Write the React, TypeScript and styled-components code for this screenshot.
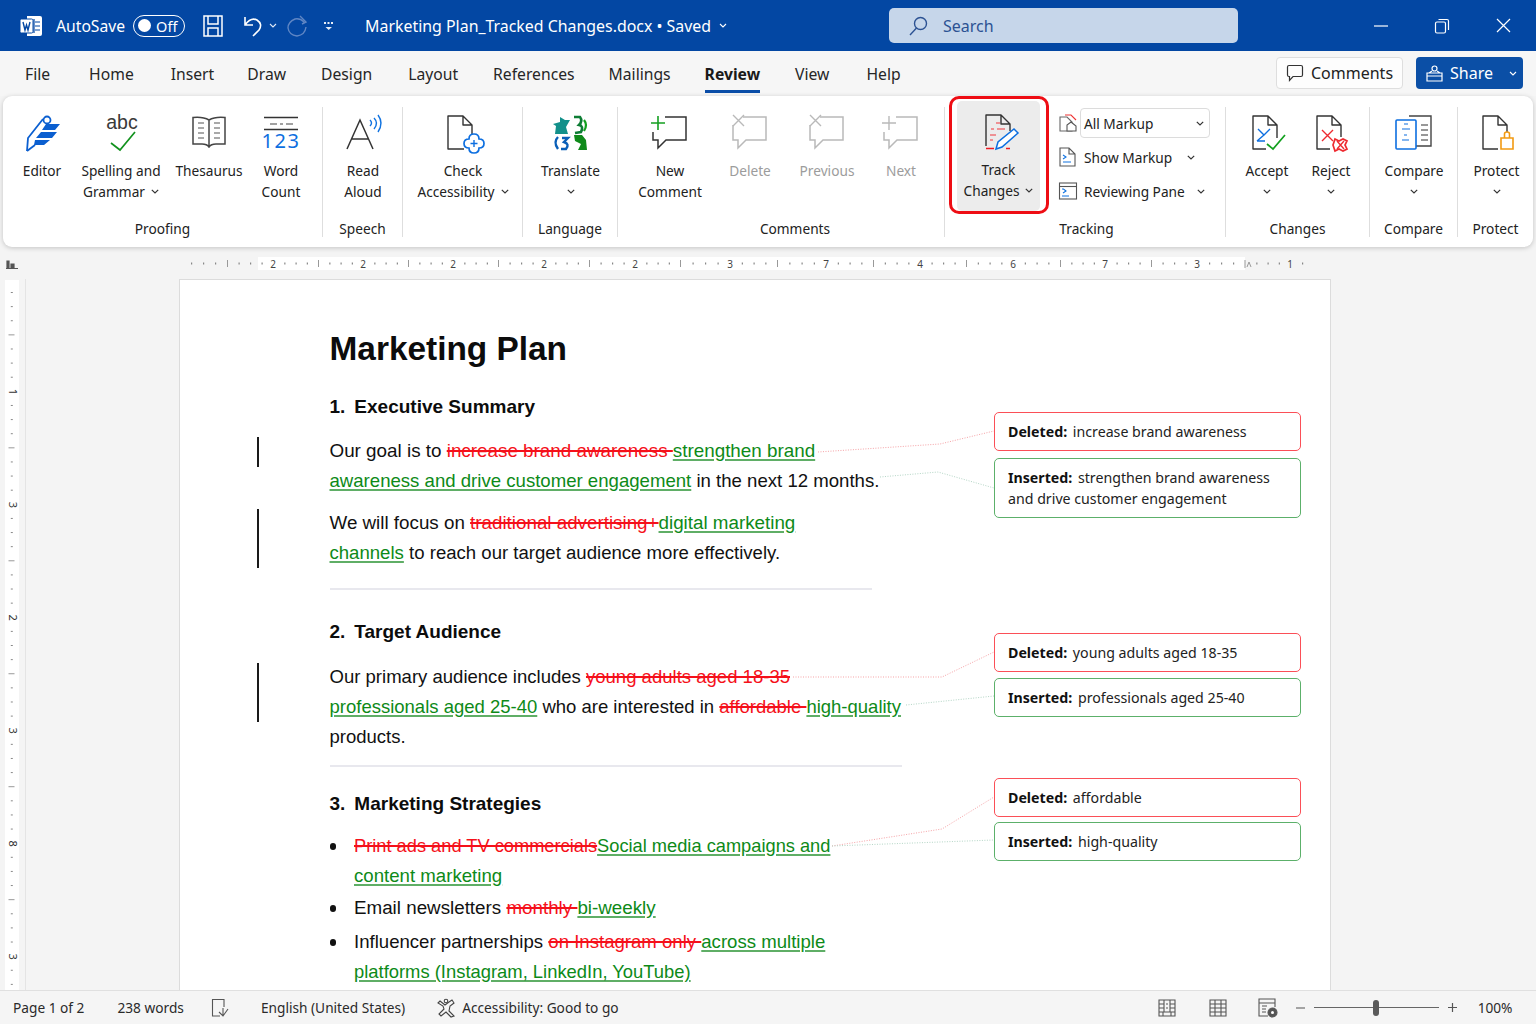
import React from "react";
import styled, { createGlobalStyle } from "styled-components";

const Global = createGlobalStyle`
  html, body { margin: 0; padding: 0; background: #f4f4f4; }
  #root { width: 1536px; height: 1024px; overflow: hidden; }
  * { box-sizing: border-box; }
`;

const UI = `"Noto Sans", "Open Sans", sans-serif`;
const DOC = `"Liberation Sans", Arial, sans-serif`;

const Shell = styled.div`
  width: 1536px; height: 1024px; display: flex; flex-direction: column;
  font-family: ${UI}; color: #222; background: #f4f4f4; overflow: hidden;
`;

/* ---------- title bar ---------- */
const TitleBar = styled.header`
  height: 51px; flex: none; background: #0347a3; color: #fff;
  display: grid; grid-template-columns: 889px 349px 1fr; align-items: center;
`;
const TitleLeft = styled.div`display: flex; align-items: center; padding-left: 20px;`;
const TitleText = styled.span<{ $ml?: number; $fs?: number }>`
  font-size: ${p => p.$fs ?? 15.7}px; margin-left: ${p => p.$ml ?? 0}px; white-space: nowrap; line-height: 20px;
`;
const Toggle = styled.div`
  width: 52px; height: 22px; margin-left: 8px; border: 1.5px solid #fff; border-radius: 11px;
  display: flex; align-items: center; padding-left: 4px; gap: 5px; font-size: 14.5px;
`;
const ToggleKnob = styled.span`width: 13px; height: 13px; border-radius: 50%; background: #fff; flex: none;`;
const Glyph = styled.svg<{ $ml?: number }>`
  display: block; flex: none; margin-left: ${p => p.$ml ?? 0}px; overflow: visible;
`;
const SearchBox = styled.div`
  height: 35px; background: #c6d6ea; border-radius: 5px; display: flex; align-items: center;
  padding-left: 19px; gap: 15px; color: #2c5293; font-size: 16px;
`;
const WindowBtns = styled.div`display: flex; align-items: center; justify-content: flex-end; padding-right: 25px; gap: 46px;`;

/* ---------- tabs ---------- */
const TabBar = styled.nav`
  height: 45px; flex: none; background: #f6f6f6; display: flex; align-items: flex-start;
  padding: 0 13px 0 25px;
`;
const Tab = styled.div<{ $active?: boolean; $ml: number }>`
  height: 42px; margin-left: ${p => p.$ml}px; padding-top: 11px; font-size: 15.7px; line-height: 24px;
  font-weight: ${p => (p.$active ? 700 : 400)}; color: ${p => (p.$active ? "#1a1a1a" : "#262626")};
  border-bottom: 3px solid ${p => (p.$active ? "#0b4ea8" : "transparent")};
  white-space: nowrap;
`;
const TabActions = styled.div`margin-left: auto; display: flex; gap: 13px; padding-top: 6px;`;
const CommentsBtn = styled.div`
  width: 127px; height: 32px; background: #fdfdfd; border: 1px solid #dedede; border-radius: 4px;
  display: flex; align-items: center; padding-left: 9px; gap: 7px; font-size: 16px;
`;
const ShareBtn = styled.div`
  width: 107px; height: 32px; background: #0b4fa6; border-radius: 4px; color: #fff;
  display: flex; align-items: center; padding-left: 9px; gap: 6px; font-size: 16px;
`;

/* ---------- ribbon ---------- */
const Ribbon = styled.section`
  height: 151px; flex: none; margin: 0 3px; background: #fff; border-radius: 9px;
  box-shadow: 0 1px 5px rgba(0,0,0,.2); display: flex; padding: 11px 0 10px; position: relative; z-index: 2;
`;
const Group = styled.div<{ $w: number; $last?: boolean }>`
  width: ${p => p.$w}px; height: 130px; flex: none; display: flex; flex-direction: column;
  border-right: ${p => (p.$last ? "0" : "1px solid #dedede")};
`;
const GroupRow = styled.div`height: 112px; display: flex; align-items: flex-start;`;
const GroupLabel = styled.div<{ $pl?: number }>`
  height: 18px; line-height: 20px; font-size: 13.7px; text-align: center; color: #222;
  padding-left: ${p => p.$pl ?? 0}px; white-space: nowrap;
`;
const Item = styled.div<{ $w: number; $off?: boolean }>`
  width: ${p => p.$w}px; flex: none; display: flex; flex-direction: column; align-items: center;
  font-size: 13.7px; line-height: 21px; text-align: center; white-space: nowrap;
  color: ${p => (p.$off ? "#9c9c9c" : "#222")};
`;
const IconSlot = styled.div`width: 40px; height: 40px; margin: 5px 0 8px;`;
const LabelLine = styled.div`height: 21px; display: flex; align-items: center; justify-content: center; gap: 6px;`;
const TrackItem = styled.div`
  width: 83px; height: 110px; margin: -6px 0 0 12px; flex: none; position: relative;
  background: #ececec; border-radius: 5px; display: flex; flex-direction: column; align-items: center;
  padding-top: 5px; font-size: 13.7px; line-height: 21px; text-align: center; white-space: nowrap;
  &::after {
    content: ""; position: absolute; inset: -5px -9px -3px -8px; border: 3px solid #ee0d14; border-radius: 10px;
  }
`;
const MiniColumn = styled.div`margin: -1px 0 0 18px; display: flex; flex-direction: column; width: 152px;`;
const MiniRow = styled.div`height: 34px; display: flex; align-items: center; font-size: 13.7px; white-space: nowrap;`;
const MiniText = styled.span<{ $w: number }>`width: ${p => p.$w}px; margin-left: 6px;`;
const MarkupSelect = styled.div`
  width: 130px; height: 30px; margin-left: 2px; border: 1px solid #dcdcdc; border-radius: 4px;
  display: flex; align-items: center; justify-content: space-between; padding: 0 5px 0 3px; font-size: 13.7px;
`;

/* ---------- document area ---------- */
const Work = styled.main`flex: 1; min-height: 0; display: flex; flex-direction: column; background: #f4f4f4;`;
const RulerRow = styled.div`height: 32px; flex: none;`;
const PageRow = styled.div`flex: 1; min-height: 0; display: flex;`;
const SideRuler = styled.div`width: 26px; flex: none; border-right: 1px solid #e4e4e4;`;
const Page = styled.article`
  width: 1152px; margin-left: 153px; background: #fff; border: 1px solid #dcdcdc; border-bottom: 0;
  padding: 49px 0 0 149.5px; position: relative; overflow: hidden;
  font-family: ${DOC}; color: #111; line-height: 30px;
`;
const DocTitle = styled.h1`margin: 0 0 23px; font-size: 33.4px; line-height: 40px; font-weight: 700; color: #0c0c0c;`;
const Section = styled.section<{ $mt?: number }>`
  display: grid; grid-template-columns: 664.5px 307px; margin-top: ${p => p.$mt ?? 0}px;
`;
const Heading = styled.h2`margin: 0; font-size: 19px; line-height: 30px; font-weight: 700; color: #0c0c0c; display: flex;`;
const HeadingNum = styled.span`margin-right: 9px;`;
const Para = styled.div<{ $mt: number }>`margin: ${p => p.$mt}px 0 0; position: relative;`;
const Ln = styled.div<{ $fs: number }>`font-size: ${p => p.$fs}px; white-space: nowrap; height: 30px;`;
const ChangeBar = styled.span<{ $h: number }>`
  position: absolute; left: -73px; top: 1px; width: 2px; height: ${p => p.$h}px; background: #1a1a1a;
`;
const Del = styled.span`color: #f5101a; text-decoration: line-through; text-decoration-thickness: 1.5px;`;
const Ins = styled.span`color: #0d8a18; text-decoration: underline; text-decoration-color: #5fae66; text-underline-offset: 2px; text-decoration-thickness: 1.5px;`;
const Rule = styled.hr<{ $w: number; $mt: number }>`
  width: ${p => p.$w}px; height: 2px; margin: ${p => p.$mt}px 0 0; border: 0; background: #e8e8ee;
`;
const CommentCol = styled.div<{ $mt: number; $gap: number }>`
  display: flex; flex-direction: column; gap: ${p => p.$gap}px; margin-top: ${p => p.$mt}px;
`;
const Balloon = styled.div<{ $kind: "del" | "ins"; $h: number }>`
  height: ${p => p.$h}px; background: #fff; border-radius: 5px; padding: 0 13px;
  border: 1.3px solid ${p => (p.$kind === "del" ? "#fb4f57" : "#5cb06a")};
  display: flex; align-items: center; font-family: ${UI}; font-size: 14.2px; line-height: 21px; color: #222; white-space: nowrap;
  b { font-weight: 700; color: #111; margin-right: 2px; }
`;
const BulletRow = styled.div<{ $mt?: number }>`display: flex; margin-top: ${p => p.$mt ?? 0}px;`;
const BulletDot = styled.span`
  width: 6.5px; height: 6.5px; margin: 12px 18px 0 0; border-radius: 50%; background: #111; flex: none;
`;
const Connectors = styled.svg`position: absolute; left: -1px; top: -1px; pointer-events: none;`;

/* ---------- status bar ---------- */
const StatusBar = styled.footer`
  height: 34px; flex: none; background: #f5f5f5; border-top: 1px solid #e0e0e0; display: flex;
  align-items: center; padding: 0 20px 0 13px; font-size: 13.7px; color: #2a2a2a;
`;
const StatusText = styled.span<{ $ml?: number }>`margin-left: ${p => p.$ml ?? 0}px; white-space: nowrap;`;
const ZoomTrack = styled.div`
  width: 125px; height: 1.5px; background: #666; margin-left: 9px; position: relative; flex: none;
`;
const ZoomThumb = styled.span`
  position: absolute; left: 59px; top: -7px; width: 6px; height: 16px; border-radius: 3px; background: #5a5a5a;
`;

/* ---------- icons ---------- */
const Chevron = ({ color = "#333" }: { color?: string }) => (
  <Glyph width="8" height="5" viewBox="0 0 8 5">
    <path d="M.8.8 4 4 7.2.8" fill="none" stroke={color} strokeWidth="1.2" />
  </Glyph>
);
const Ico = ({ children }: { children: React.ReactNode }) => (
  <IconSlot>
    <Glyph width="40" height="40" viewBox="0 0 40 40" fill="none" strokeWidth="1.4">{children}</Glyph>
  </IconSlot>
);
const bubble = "M3 20V28H8V36L16 28H36V5H15";
const G = "#b9b9b9";

const EditorIcon = () => (
  <Ico>
    <path d="M5 39 6 26 21 7" stroke="#0b5fd0" strokeWidth="1.8" />
    <circle cx="25" cy="8" r="3.5" stroke="#0b5fd0" strokeWidth="1.8" />
    <path d="M5 39 13 33" stroke="#0b5fd0" strokeWidth="1.8" />
    <path d="M24 12H38L33 18H20ZM19 20H35L30 26H14ZM13 28H28L22 33H12Z" fill="#0b5fd0" />
  </Ico>
);
const SpellIcon = () => (
  <Ico>
    <text x="21" y="17" textAnchor="middle" fontFamily={DOC} fontSize="19.5" fill="#3a3a3a">abc</text>
    <path d="M10 31 19 38 34 20" stroke="#12921e" strokeWidth="1.7" />
  </Ico>
);
const BookIcon = () => (
  <Ico>
    <path d="M20 8Q14 4.500 4 5.500V32H13Q18 32 20 35Q22 32 27 32H36V5.500Q26 4.500 20 8V35" stroke="#444" strokeWidth="1.5" />
    <path d="M9 11H15M9 16H15M9 21H15M9 26H15M25 11H31M25 16H31M25 21H31M25 26H31" stroke="#555" strokeWidth="1.2" />
  </Ico>
);
const CountIcon = () => (
  <Ico>
    <path d="M3 5.500H37M3 17.500H37" stroke="#333" strokeWidth="1.3" />
    <path d="M9 12H16M19 12H22M25 12H32" stroke="#444" strokeWidth="1.2" />
    <text x="20" y="36" textAnchor="middle" fontFamily={UI} fontSize="20" letterSpacing="1.5" fill="#0d6fe0">123</text>
  </Ico>
);
const AloudIcon = () => (
  <Ico>
    <path d="M4 37 17 8 30 37M9 27H25" stroke="#333" strokeWidth="1.5" />
    <path d="M27 8Q30 11 27 14M31 6Q36 11 31 17M35 3Q41 11 35 20" stroke="#1173e0" strokeWidth="1.4" />
  </Ico>
);
const AccessIcon = () => (
  <Ico>
    <path d="M21 37H5V4H20L29 13V24M20 4V13H29" stroke="#333" strokeLinejoin="round" />
    <path d="M26 27Q26 22 31 22Q36 22 36 27Q41 27 41 31.500Q41 36 36 36Q36 41 31 41Q26 41 26 36Q21 36 21 31.500Q21 27 26 27Z" stroke="#0d6fe0" strokeWidth="1.7" fill="#fff" />
    <path d="M31 28V35M27.500 31.500H34.500" stroke="#0d6fe0" strokeWidth="1.4" />
  </Ico>
);
const TranslateIcon = () => (
  <Ico>
    <path d="M2 12 9 10V5L14 8 19 8 15 15 17 22H4L5 14Z" fill="#12908a" />
    <path d="M23 5H29Q32 9 28 13Q33 14 30 20L24 21" stroke="#0d7d34" strokeWidth="2.6" />
    <path d="M33 8Q37 13 33 19" stroke="#12a01e" strokeWidth="2.2" />
    <path d="M7 25Q2 30 7 37" stroke="#0a5fb8" strokeWidth="2.4" />
    <path d="M11 26H17L13 30Q19 32 15 37H10" stroke="#0a5fb8" strokeWidth="2.4" />
    <path d="M23 23H31L35 28 36 38H27L30 32 24 29Z" fill="#0f8a1a" />
  </Ico>
);
const NewCommentIcon = () => (
  <Ico>
    <path d={bubble} stroke="#333" strokeWidth="1.5" />
    <path d="M8 4V18M1 11H15" stroke="#15a021" strokeWidth="1.6" />
  </Ico>
);
const XBubble = () => (
  <Ico>
    <path d="M3 13V28H8V36L16 28H36V5H13" stroke={G} strokeWidth="1.5" />
    <path d="M3 3 14 14M14 3 3 14" stroke={G} strokeWidth="1.4" />
  </Ico>
);
const NextIcon = () => (
  <Ico>
    <path d={bubble} stroke={G} strokeWidth="1.5" />
    <path d="M8 4V18M1 11H15" stroke={G} strokeWidth="1.4" />
  </Ico>
);
const TrackIcon = () => (
  <Ico>
    <path d="M7 35V4H22L31 13V20M22 4V13H31" stroke="#333" strokeLinejoin="round" />
    <path d="M7 37.500H15M27 37.500H31" stroke="#ee1c24" strokeWidth="1.6" />
    <path d="M17 12H21M12 18H15M18 18H26M11 24H17M11 29H14" stroke="#f0363d" strokeWidth="1.2" />
    <path d="M17 38 19 31 35 18 39 22 23 36Z" stroke="#0d6fe0" strokeWidth="1.5" fill="#fff" />
  </Ico>
);
const AcceptIcon = () => (
  <Ico>
    <path d="M19 37H6V4H21L30 13V26M21 4V13H30" stroke="#333" strokeLinejoin="round" />
    <path d="M11 17 17 23 23 17M10 29H18M17 23 10 29" stroke="#0d6fe0" strokeWidth="1.4" />
    <path d="M20 32 26 37 38 23" stroke="#12a01e" strokeWidth="1.7" />
  </Ico>
);
const RejectIcon = () => (
  <Ico>
    <path d="M19 37H6V4H21L30 13V25M21 4V13H30" stroke="#333" strokeLinejoin="round" />
    <path d="M11 18 22 29M22 18 11 29" stroke="#ee2a30" strokeWidth="1.4" />
    <path d="M24 27 28 29 32 27 36 29 34 33 36 37 32 39 28 37 24 39 22 33Z" stroke="#ee2a30" strokeWidth="1.7" fill="#fff" />
    <path d="M26 29 33 37M33 29 26 37" stroke="#ee2a30" strokeWidth="1.4" />
  </Ico>
);
const CompareIcon = () => (
  <Ico>
    <path d="M15 4H37V34H22" stroke="#444" strokeWidth="1.4" />
    <path d="M27 13H34M27 18H34M27 23H34M27 28H34" stroke="#777" strokeWidth="1.3" />
    <rect x="2" y="8" width="20" height="29" rx="1" stroke="#0d6fe0" strokeWidth="1.6" fill="#fff" />
    <path d="M10 12H14M8 17H16M10 23H13M8 28H15" stroke="#0d6fe0" strokeWidth="1.2" />
  </Ico>
);
const ProtectIcon = () => (
  <Ico>
    <path d="M21 37H6V4H21L30 13V20M21 4V13H30" stroke="#333" strokeLinejoin="round" />
    <path d="M24 26H36V37H24ZM27.500 26V22Q27.500 20 30 20Q32.500 20 32.500 22V26" stroke="#f29a12" strokeWidth="1.6" />
  </Ico>
);
const Mini = ({ children }: { children: React.ReactNode }) => (
  <Glyph width="20" height="20" viewBox="0 0 20 20" fill="none" strokeWidth="1.1">{children}</Glyph>
);

/* ---------- rulers (drawings) ---------- */
const topMarks: [number, string][] = [
  [227, "|"], [273, "2"], [318, "|"], [363, "2"], [408, "|"], [453, "2"], [498, "|"], [544, "2"], [589, "|"],
  [635, "2"], [680, "|"], [730, "3"], [777, "|"], [826, "7"], [873, "|"], [920, "4"], [966, "|"], [1013, "6"],
  [1060, "|"], [1105, "7"], [1151, "|"], [1197, "3"], [1245, "^"], [1290, "1"],
];
const TopRuler = () => {
  const dots: number[] = [191, 203, 215, 1302];
  topMarks.slice(0, -1).forEach(([x], i) => {
    const n = topMarks[i + 1][0];
    [1, 2, 3].forEach(k => dots.push(x + ((n - x) * k) / 4));
  });
  return (
    <Glyph width="1536" height="32" viewBox="0 0 1536 32">
      <rect x="258" y="10" width="987" height="13" fill="#fff" />
      <path d="M7 21V14H9V21ZM11 21V17H14V21ZM6 21.500H18" stroke="#555" strokeWidth="1.2" fill="#555" />
      {dots.map(x => <rect key={x} x={x} y="15.500" width="1.200" height="2" fill="#888" />)}
      {topMarks.map(([x, t]) =>
        t === "|" ? <rect key={x} x={x} y="13" width="1" height="7" fill="#999" />
          : t === "^" ? <path key={x} d="M1245 21V13M1247 20 1249 15 1251 20" stroke="#999" fill="none" />
            : <text key={x} x={x} y="20.500" textAnchor="middle" fontFamily={UI} fontSize="10" fill="#444">{t}</text>
      )}
    </Glyph>
  );
};
const sideNums: Record<number, string> = { 7: "1", 15: "3", 23: "2", 31: "3", 39: "8", 47: "3" };
const SideRulerArt = () => (
  <Glyph width="25" height="711" viewBox="0 0 25 711">
    <rect x="5" y="1" width="14" height="710" fill="#fff" />
    {Array.from({ length: 50 }, (_, i) => {
      const y = 13 + i * 14.12;
      if (sideNums[i]) return <text key={i} x="12" y={y + 4.500} textAnchor="middle" fontFamily={UI} fontSize="11" fill="#333" transform={`rotate(90 12 ${y + 1})`}>{sideNums[i]}</text>;
      return i % 4 === 3
        ? <rect key={i} x="8.500" y={y} width="6" height="1" fill="#999" />
        : <rect key={i} x="10.800" y={y} width="2" height="1" fill="#888" />;
    })}
  </Glyph>
);

const Line = ({ p, c }: { p: string; c: string }) => (
  <polyline points={p} fill="none" stroke={c} strokeWidth="1" strokeDasharray="1 1.500" />
);
const R = "#f6a3a7", GR = "#b4d6c6";
const shift = (pts: [number, number][]) => pts.map(([x, y]) => `${x - 179},${y - 279}`).join(" ");

export default function App() {
  return (
    <Shell>
      <Global />
      <TitleBar>
        <TitleLeft>
          <Glyph width="22" height="20" viewBox="0 0 22 20">
            <path d="M7 0H20Q22 0 22 2V18Q22 20 20 20H7Z" fill="#fff" />
            <path d="M14 3V17M15 6H20M15 10H20M15 14H20" stroke="#0347a3" strokeWidth="1.200" fill="none" />
            <rect x="0" y="3" width="13" height="14" rx="1.500" fill="#fff" stroke="#0347a3" />
            <path d="M3 6 5 14 6.500 9 8 14 10 6" stroke="#0347a3" strokeWidth="1.400" fill="none" />
          </Glyph>
          <TitleText $ml={14}>AutoSave</TitleText>
          <Toggle><ToggleKnob />Off</Toggle>
          <Glyph $ml={18} width="20" height="22" viewBox="0 0 20 22" fill="none" stroke="#fff" strokeWidth="1.500">
            <path d="M1 1H19V21H1ZM5 1V9H15V1M5 21V13H15V21" />
          </Glyph>
          <Glyph $ml={20} width="20" height="22" viewBox="0 0 20 22" fill="none" stroke="#fff" strokeWidth="1.600">
            <path d="M2 2V10H10M2 10Q8 2 14 5Q20 9 16 15L10 21" />
          </Glyph>
          <Glyph $ml={6} width="8" height="5" viewBox="0 0 8 5"><path d="M1 1 4 4 7 1" stroke="#dfe8f5" fill="none" strokeWidth="1.100" /></Glyph>
          <Glyph $ml={10} width="21" height="22" viewBox="0 0 21 22" fill="none" stroke="#5f86c4" strokeWidth="1.400">
            <path d="M17 7Q13 3 8 4Q1 7 1 13Q2 20 10 21Q18 20 19 12M13 1 19 7 15 9" />
          </Glyph>
          <Glyph $ml={16} width="10" height="8" viewBox="0 0 10 8" fill="#e6edf7">
            <rect x="0" y="0" width="2" height="2" /><rect x="3.500" y="0" width="2" height="2" /><rect x="7" y="0" width="2" height="2" />
            <path d="M1.500 5H8L4.700 8Z" />
          </Glyph>
          <TitleText $ml={31} $fs={15.9}>Marketing Plan_Tracked Changes.docx • Saved</TitleText>
          <Glyph $ml={8} width="8" height="5" viewBox="0 0 8 5"><path d="M1 1 4 4 7 1" stroke="#fff" fill="none" strokeWidth="1.100" /></Glyph>
        </TitleLeft>
        <SearchBox>
          <Glyph width="20" height="20" viewBox="0 0 20 20" fill="none" stroke="#2c5293" strokeWidth="1.400">
            <circle cx="12.500" cy="7.500" r="6" /><path d="M8.500 12 2 19" />
          </Glyph>
          Search
        </SearchBox>
        <WindowBtns>
          <Glyph width="14" height="2" viewBox="0 0 14 2"><path d="M0 1H14" stroke="#fff" strokeWidth="1.200" /></Glyph>
          <Glyph width="16" height="16" viewBox="0 0 16 16" fill="none" stroke="#fff" strokeWidth="1.200">
            <rect x="1.500" y="4" width="10" height="11" rx="1.500" /><path d="M4.500 1.500H13Q14.500 1.500 14.500 3V12" />
          </Glyph>
          <Glyph width="15" height="15" viewBox="0 0 15 15" stroke="#fff" strokeWidth="1.200"><path d="M1 1 14 14M14 1 1 14" /></Glyph>
        </WindowBtns>
      </TitleBar>

      <TabBar>
        <Tab $ml={0}>File</Tab>
        <Tab $ml={39}>Home</Tab>
        <Tab $ml={37}>Insert</Tab>
        <Tab $ml={33}>Draw</Tab>
        <Tab $ml={35}>Design</Tab>
        <Tab $ml={36}>Layout</Tab>
        <Tab $ml={35}>References</Tab>
        <Tab $ml={34}>Mailings</Tab>
        <Tab $ml={34} $active>Review</Tab>
        <Tab $ml={35}>View</Tab>
        <Tab $ml={37}>Help</Tab>
        <TabActions>
          <CommentsBtn>
            <Glyph width="18" height="18" viewBox="0 0 18 18" fill="none" stroke="#333" strokeWidth="1.200">
              <path d="M3 1.500H15Q16.500 1.500 16.500 3V11Q16.500 12.500 15 12.500H7L3.500 16.500V12.500H3Q1.500 12.500 1.500 11V3Q1.500 1.500 3 1.500Z" />
            </Glyph>
            Comments
          </CommentsBtn>
          <ShareBtn>
            <Glyph width="19" height="19" viewBox="0 0 19 19" fill="none" stroke="#fff" strokeWidth="1.200">
              <circle cx="9.500" cy="4.500" r="2.500" /><path d="M2 9H17V17H2ZM2 12H17M7 7 4 9M12 7 15 9" />
            </Glyph>
            Share
            <Glyph $ml={10} width="8" height="5" viewBox="0 0 8 5"><path d="M1 1 4 4 7 1" stroke="#fff" fill="none" strokeWidth="1.100" /></Glyph>
          </ShareBtn>
        </TabActions>
      </TabBar>

      <Ribbon>
        <Group $w={320}>
          <GroupRow>
            <Item $w={78}><EditorIcon />Editor</Item>
            <Item $w={80}><SpellIcon />Spelling and<LabelLine>Grammar<Chevron /></LabelLine></Item>
            <Item $w={96}><BookIcon />Thesaurus</Item>
            <Item $w={48}><CountIcon />Word<br />Count</Item>
          </GroupRow>
          <GroupLabel>Proofing</GroupLabel>
        </Group>
        <Group $w={80}>
          <GroupRow><Item $w={80}><AloudIcon />Read<br />Aloud</Item></GroupRow>
          <GroupLabel>Speech</GroupLabel>
        </Group>
        <Group $w={120}>
          <GroupRow><Item $w={120}><AccessIcon />Check<LabelLine>Accessibility<Chevron /></LabelLine></Item></GroupRow>
        </Group>
        <Group $w={95}>
          <GroupRow><Item $w={95}><TranslateIcon />Translate<LabelLine><Chevron /></LabelLine></Item></GroupRow>
          <GroupLabel>Language</GroupLabel>
        </Group>
        <Group $w={327}>
          <GroupRow>
            <Item $w={104}><NewCommentIcon />New<br />Comment</Item>
            <Item $w={56} $off><XBubble />Delete</Item>
            <Item $w={98} $off><XBubble />Previous</Item>
            <Item $w={50} $off><NextIcon />Next</Item>
          </GroupRow>
          <GroupLabel $pl={28}>Comments</GroupLabel>
        </Group>
        <Group $w={281}>
          <GroupRow>
            <TrackItem><TrackIcon />Track<LabelLine>Changes<Chevron /></LabelLine></TrackItem>
            <MiniColumn>
              <MiniRow>
                <Mini>
                  <path d="M2 4H9L14 9V18H2Z" stroke="#666" />
                  <path d="M7 2H13L18 7" stroke="#e33" />
                  <path d="M9 18V12L13 9 18 13V18Z" stroke="#555" fill="#fff" />
                </Mini>
                <MarkupSelect>All Markup<Chevron /></MarkupSelect>
              </MiniRow>
              <MiniRow>
                <Mini>
                  <path d="M2 1H11L17 7V19H2ZM11 1V7H17" stroke="#555" />
                  <path d="M5 8 8 10 5 12M5 15H13" stroke="#1173e0" />
                </Mini>
                <MiniText $w={103}>Show Markup</MiniText>
                <Chevron />
              </MiniRow>
              <MiniRow>
                <Mini>
                  <rect x="1.500" y="2" width="17" height="16" stroke="#555" />
                  <path d="M1.500 5.500H18.500" stroke="#555" />
                  <path d="M4 8H5.500L8 10 5 12M4 15H11" stroke="#1173e0" />
                </Mini>
                <MiniText $w={113}>Reviewing Pane</MiniText>
                <Chevron />
              </MiniRow>
            </MiniColumn>
          </GroupRow>
          <GroupLabel $pl={3}>Tracking</GroupLabel>
        </Group>
        <Group $w={144}>
          <GroupRow>
            <Item $w={82}><AcceptIcon />Accept<LabelLine><Chevron /></LabelLine></Item>
            <Item $w={46}><RejectIcon />Reject<LabelLine><Chevron /></LabelLine></Item>
          </GroupRow>
          <GroupLabel>Changes</GroupLabel>
        </Group>
        <Group $w={88}>
          <GroupRow><Item $w={88}><CompareIcon />Compare<LabelLine><Chevron /></LabelLine></Item></GroupRow>
          <GroupLabel>Compare</GroupLabel>
        </Group>
        <Group $w={75} $last>
          <GroupRow><Item $w={77}><ProtectIcon />Protect<LabelLine><Chevron /></LabelLine></Item></GroupRow>
          <GroupLabel>Protect</GroupLabel>
        </Group>
      </Ribbon>

      <Work>
        <RulerRow><TopRuler /></RulerRow>
        <PageRow>
          <SideRuler><SideRulerArt /></SideRuler>
          <Page>
            <DocTitle>Marketing Plan</DocTitle>
            <Section>
              <div>
                <Heading><HeadingNum>1.</HeadingNum>Executive Summary</Heading>
                <Para $mt={14}>
                  <ChangeBar $h={30} />
                  <Ln $fs={18.83}>Our goal is to <Del>increase brand awareness </Del><Ins>strengthen brand</Ins></Ln>
                  <Ln $fs={18.6}><Ins>awareness and drive customer engagement</Ins> in the next 12 months.</Ln>
                </Para>
                <Para $mt={12}>
                  <ChangeBar $h={59} />
                  <Ln $fs={18.8}>We will focus on <Del>traditional advertising+</Del><Ins>digital marketing</Ins></Ln>
                  <Ln $fs={18.58}><Ins>channels</Ins> to reach our target audience more effectively.</Ln>
                </Para>
                <Rule $w={542} $mt={20} />
              </div>
              <CommentCol $mt={20} $gap={7}>
                <Balloon $kind="del" $h={39}><span><b>Deleted:</b> increase brand awareness</span></Balloon>
                <Balloon $kind="ins" $h={60}><span><b>Inserted:</b> strengthen brand awareness<br />and drive customer engagement</span></Balloon>
              </CommentCol>
            </Section>
            <Section $mt={27}>
              <div>
                <Heading><HeadingNum>2.</HeadingNum>Target Audience</Heading>
                <Para $mt={15}>
                  <ChangeBar $h={59} />
                  <Ln $fs={18.55}>Our primary audience includes <Del>young adults aged 18-35</Del></Ln>
                  <Ln $fs={18.5}><Ins>professionals aged 25-40</Ins> who are interested in <Del>affordable </Del><Ins>high-quality</Ins></Ln>
                  <Ln $fs={18.5}>products.</Ln>
                </Para>
                <Rule $w={572} $mt={13} />
              </div>
              <CommentCol $mt={16} $gap={6}>
                <Balloon $kind="del" $h={39}><span><b>Deleted:</b> young adults aged 18-35</span></Balloon>
                <Balloon $kind="ins" $h={39}><span><b>Inserted:</b> professionals aged 25-40</span></Balloon>
              </CommentCol>
            </Section>
            <Section $mt={22}>
              <div>
                <Heading><HeadingNum>3.</HeadingNum>Marketing Strategies</Heading>
                <BulletRow $mt={12}>
                  <BulletDot />
                  <div>
                    <Ln $fs={18.25}><Del>Print ads and TV commercials</Del><Ins>Social media campaigns and</Ins></Ln>
                    <Ln $fs={18.65}><Ins>content marketing</Ins></Ln>
                  </div>
                </BulletRow>
                <BulletRow $mt={2}>
                  <BulletDot />
                  <Ln $fs={18.8}>Email newsletters <Del>monthly </Del><Ins>bi-weekly</Ins></Ln>
                </BulletRow>
                <BulletRow $mt={4}>
                  <BulletDot />
                  <div>
                    <Ln $fs={18.6}>Influencer partnerships <Del>on Instagram only </Del><Ins>across multiple</Ins></Ln>
                    <Ln $fs={18.4}><Ins>platforms (Instagram, LinkedIn, YouTube)</Ins></Ln>
                  </div>
                </BulletRow>
              </div>
              <CommentCol $mt={-11} $gap={5}>
                <Balloon $kind="del" $h={39}><span><b>Deleted:</b> affordable</span></Balloon>
                <Balloon $kind="ins" $h={39}><span><b>Inserted:</b> high-quality</span></Balloon>
              </CommentCol>
            </Section>
            <Connectors width="1150" height="711" viewBox="0 0 1150 711">
              <Line c={R} p={shift([[818, 452], [940, 444], [994, 431]])} />
              <Line c={GR} p={shift([[880, 477], [938, 472], [994, 488]])} />
              <Line c={R} p={shift([[793, 677], [942, 677], [994, 652]])} />
              <Line c={GR} p={shift([[906, 705], [994, 696]])} />
              <Line c={R} p={shift([[832, 846], [942, 829], [994, 797]])} />
              <Line c={GR} p={shift([[832, 846], [994, 840]])} />
            </Connectors>
          </Page>
        </PageRow>
      </Work>

      <StatusBar>
        <StatusText>Page 1 of 2</StatusText>
        <StatusText $ml={33}>238 words</StatusText>
        <Glyph $ml={27} width="20" height="20" viewBox="0 0 20 20" fill="none" stroke="#555" strokeWidth="1.100">
          <path d="M9 18H1.500V1.500H13V9M12 10V18M8 14 12 18 17 11" />
        </Glyph>
        <StatusText $ml={30}>English (United States)</StatusText>
        <Glyph $ml={32} width="20" height="20" viewBox="0 0 20 20" fill="none" stroke="#444" strokeWidth="1.100">
          <path d="M3 3 8 7 12 4 15 2 17 5 13 8 12 13 17 18 14 19 9 14 4 18 2 16 7 11 6 8 1 5Z" />
          <circle cx="9" cy="3" r="1.800" />
        </Glyph>
        <StatusText $ml={5}>Accessibility: Good to go</StatusText>
        <Glyph $ml={539} width="18" height="18" viewBox="0 0 18 18" fill="none" stroke="#555" strokeWidth="1.100">
          <path d="M1 1H17V17H1ZM1 5H6M12 5H17M1 9H6M12 9H17M1 13H17M6 1V13M12 1V13M5 17V13M13 17V13M8 5H10M8 9H10" />
        </Glyph>
        <Glyph $ml={33} width="18" height="18" viewBox="0 0 18 18" fill="none" stroke="#555" strokeWidth="1.100">
          <path d="M1 1H17V17H1ZM1 5H17M1 9H17M1 13H17M6 1V17M12 1V17" />
        </Glyph>
        <Glyph $ml={31} width="20" height="20" viewBox="0 0 20 20" fill="none" stroke="#555" strokeWidth="1.100">
          <path d="M10 18H1V1H17V9M1 5H17M4 8H9M4 11H8M4 14H8" />
          <circle cx="14.500" cy="14.500" r="4.500" fill="#555" />
          <circle cx="14.500" cy="14.500" r="1.500" fill="#fff" stroke="none" />
        </Glyph>
        <Glyph $ml={18} width="9" height="2" viewBox="0 0 9 2"><path d="M0 1H9" stroke="#777" strokeWidth="1.300" /></Glyph>
        <ZoomTrack><ZoomThumb /></ZoomTrack>
        <Glyph $ml={9} width="9" height="9" viewBox="0 0 9 9"><path d="M0 4.500H9M4.500 0V9" stroke="#555" strokeWidth="1.200" /></Glyph>
        <StatusText $ml={21}>100%</StatusText>
      </StatusBar>
    </Shell>
  );
}
